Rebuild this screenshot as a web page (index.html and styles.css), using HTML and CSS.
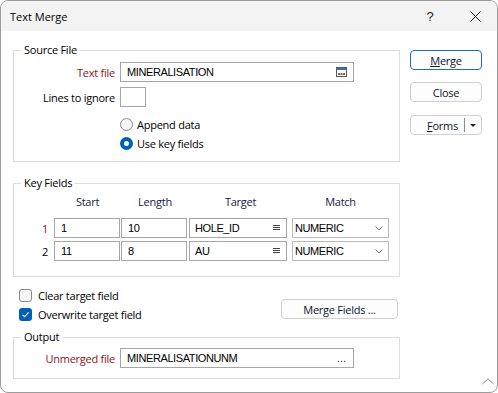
FILE: index.html
```html
<!DOCTYPE html>
<html lang="en">
<head>
    <meta charset="UTF-8">
    <title>Text Merge</title>
    <link rel="stylesheet" href="styles.css">
</head>
<body>
    <div class="window">
        <div class="titlebar">
            <span class="title">Text Merge</span>
            <span class="help">?</span>
            <span class="close-x">
                <svg width="11" height="11" viewBox="0 0 11 11"><path d="M0.5 0.5 L10.5 10.5 M10.5 0.5 L0.5 10.5" stroke="#1a1a1a" stroke-width="1"/></svg>
            </span>
        </div>

        <div class="body">
            <div class="main">
                <fieldset class="group source">
                    <legend>Source File</legend>
                    <div class="group-body">
                        <div class="form-row">
                            <span class="lbl req">Text file</span>
                            <div class="input file-input">
                                <span class="val">MINERALISATION</span>
                                <svg class="browse" width="11" height="10" viewBox="0 0 11 10">
                                    <rect x="0.5" y="0.5" width="10" height="9" fill="#fff" stroke="#4a5878"/>
                                    <rect x="1" y="1" width="9" height="2" fill="#3f6fa6"/>
                                    <rect x="2" y="6" width="2" height="2" fill="#8c6a2a"/>
                                    <rect x="4.5" y="6" width="2" height="2" fill="#8c6a2a"/>
                                    <rect x="7" y="6" width="2" height="2" fill="#8c6a2a"/>
                                </svg>
                            </div>
                        </div>
                        <div class="form-row gap">
                            <span class="lbl">Lines to ignore</span>
                            <div class="input small-input"></div>
                        </div>
                        <div class="radio-row first"><span class="radio"></span>Append data</div>
                        <div class="radio-row"><span class="radio on"></span>Use key fields</div>
                    </div>
                </fieldset>

                <fieldset class="group keys">
                    <legend>Key Fields</legend>
                    <div class="group-body">
                        <div class="key-grid">
                            <span class="col-head"></span>
                            <span class="col-head">Start</span>
                            <span class="col-head">Length</span>
                            <span class="col-head">Target</span>
                            <span class="col-head">Match</span>

                            <span class="row-no req">1</span>
                            <div class="input k-num">1</div>
                            <div class="input k-num">10</div>
                            <div class="input k-target"><span class="val">HOLE_ID</span><svg width="7" height="6" viewBox="0 0 7 6"><path d="M0 0.5 H7 M0 2.5 H7 M0 4.5 H7" stroke="#444" stroke-width="1"/></svg></div>
                            <div class="select"><span class="val">NUMERIC</span><svg width="8" height="5" viewBox="0 0 8 5"><path d="M0.5 0.5 L4 4 L7.5 0.5" stroke="#777" fill="none"/></svg></div>

                            <span class="row-no">2</span>
                            <div class="input k-num">11</div>
                            <div class="input k-num">8</div>
                            <div class="input k-target"><span class="val">AU</span><svg width="7" height="6" viewBox="0 0 7 6"><path d="M0 0.5 H7 M0 2.5 H7 M0 4.5 H7" stroke="#444" stroke-width="1"/></svg></div>
                            <div class="select"><span class="val">NUMERIC</span><svg width="8" height="5" viewBox="0 0 8 5"><path d="M0.5 0.5 L4 4 L7.5 0.5" stroke="#777" fill="none"/></svg></div>
                        </div>
                    </div>
                </fieldset>

                <div class="options">
                    <div class="checks">
                        <div class="check-row"><span class="checkbox"></span>Clear target field</div>
                        <div class="check-row"><span class="checkbox on"><svg width="13" height="13" viewBox="0 0 13 13"><path d="M3.5 6.8 L5.6 8.8 L9.6 4.4" stroke="#fff" stroke-width="1.1" fill="none"/></svg></span>Overwrite target field</div>
                    </div>
                    <button class="btn merge-fields">Merge Fields ...</button>
                </div>

                <fieldset class="group output">
                    <legend>Output</legend>
                    <div class="group-body">
                        <div class="form-row">
                            <span class="lbl req">Unmerged file</span>
                            <div class="input file-input">
                                <span class="val">MINERALISATIONUNM</span>
                                <span class="dots">...</span>
                            </div>
                        </div>
                    </div>
                </fieldset>
            </div>

            <div class="side">
                <button class="btn default"><u>M</u>erge</button>
                <button class="btn close-btn">Close</button>
                <button class="btn forms-btn"><span><u>F</u>orms</span><span class="divider"></span><span class="arrow"></span></button>
            </div>
        </div>

        <svg class="grip" width="12" height="7" viewBox="0 0 12 7"><path d="M0.5 6 L6 0.8 L11.5 6" stroke="#8a8a8a" fill="none"/></svg>
    </div>
</body>
</html>
```

FILE: styles.css
```css
* {
    margin: 0;
    padding: 0;
    box-sizing: border-box;
}

body {
    font-family: "Open Sans", "Segoe UI", sans-serif;
    font-size: 11px;
    letter-spacing: -0.25px;
    color: #000;
    background: #fff;
}

.window {
    position: relative;
    width: 498px;
    height: 393px;
    border: 1px solid #9c9c9c;
    border-radius: 8px;
    overflow: hidden;
    background: #fff;
}

.titlebar {
    display: flex;
    align-items: center;
    height: 30px;
    background: #f3f3f3;
    padding: 0 12px 0 9px;
}

.title {
    flex: 1;
    letter-spacing: 0;
}

.help {
    width: 20px;
    text-align: center;
    font-family: "Liberation Sans", sans-serif;
    font-size: 13px;
    color: #222;
}

.close-x {
    width: 20px;
    margin-left: 25px;
    display: flex;
    justify-content: center;
}

.body {
    display: flex;
    padding-left: 12px;
}

.main {
    width: 387px;
    padding-top: 11px;
}

.side {
    width: 72px;
    margin-left: 10px;
    padding-top: 19px;
    display: flex;
    flex-direction: column;
}

/* group boxes */
.group {
    border: 1px solid #dcdcdc;
    padding: 0;
    margin: 0;
    min-width: 0;
}

.group legend {
    margin-left: 7px;
    padding: 0 3px;
    line-height: 16px;
}

.source .group-body {
    padding: 4px 0 8px;
}

.keys {
    margin-top: 13px;
}

.keys .group-body {
    padding: 3px 0 15px;
}

.output {
    margin-top: 6px;
}

.output .group-body {
    padding: 3px 0 10px;
}

.form-row {
    display: flex;
    align-items: center;
    height: 20px;
}

.form-row.gap {
    margin-top: 5px;
}

.lbl {
    width: 101px;
    margin-right: 5px;
    text-align: right;
}

.req {
    color: #8e1414;
}

/* inputs */
.input,
.select {
    height: 20px;
    border: 1px solid #a6a6a6;
    background: #fff;
    display: flex;
    align-items: center;
    font-family: "Liberation Sans", sans-serif;
    font-size: 11px;
    letter-spacing: -0.4px;
}

.file-input {
    width: 234px;
    padding: 0 6px;
    justify-content: space-between;
}

.small-input {
    width: 26px;
}

.dots {
    color: #10204a;
    letter-spacing: 0;
    margin-right: 1px;
}

.radio-row {
    display: flex;
    align-items: center;
    height: 19px;
    padding-left: 106px;
}

.radio-row.first {
    margin-top: 8px;
}

.radio {
    width: 13px;
    height: 13px;
    border: 1px solid #8a8a8a;
    border-radius: 50%;
    background: #f6f6f6;
    margin-right: 4px;
}

.radio.on {
    border: 4px solid #005fb8;
    background: #fff;
}

/* key fields grid */
.key-grid {
    display: grid;
    grid-template-columns: 40px 67px 68px 103px 97px;
    row-gap: 3px;
    align-items: center;
}

.col-head {
    height: 16px;
    line-height: 16px;
    margin-bottom: 5px;
    text-align: center;
    color: #14203e;
}

.row-no {
    text-align: right;
    padding-right: 6px;
}

.k-num {
    width: 66px;
    padding-left: 6px;
}

.k-target {
    width: 98px;
    padding: 0 6px 0 5px;
    justify-content: space-between;
}

.select {
    width: 97px;
    border-color: #bababa;
    padding: 0 5px 0 2px;
    justify-content: space-between;
}

/* checkboxes */
.options {
    display: flex;
    justify-content: space-between;
    padding-top: 9px;
}

.check-row {
    display: flex;
    align-items: center;
    height: 18px;
    padding-left: 6px;
}

.check-row + .check-row {
    margin-top: 1px;
}

.checkbox {
    width: 13px;
    height: 13px;
    border: 1px solid #8a8a8a;
    border-radius: 3px;
    background: #f6f6f6;
    margin-right: 6px;
}

.checkbox.on {
    border: none;
    background: #005fb8;
}

.checkbox svg {
    display: block;
}

/* buttons */
.btn {
    height: 20px;
    border: 1px solid #d0d0d0;
    border-radius: 4px;
    background: #fdfdfd;
    font-family: "Open Sans", "Segoe UI", sans-serif;
    font-size: 11px;
    letter-spacing: -0.25px;
    color: #0d1630;
    display: flex;
    align-items: center;
    justify-content: center;
}

.btn.default {
    border-color: #1a6fc4;
}

.close-btn {
    margin-top: 12px;
}

.forms-btn {
    margin-top: 13px;
    justify-content: flex-end;
    padding-right: 5px;
}

.divider {
    width: 1px;
    height: 14px;
    background: #8c8c8c;
    margin: 0 5px 0 6px;
}

.arrow {
    width: 0;
    height: 0;
    border-left: 3px solid transparent;
    border-right: 3px solid transparent;
    border-top: 3px solid #222;
}

.merge-fields {
    width: 117px;
    margin-top: 13px;
    margin-right: 2px;
}

.grip {
    position: absolute;
    right: 3px;
    bottom: 7px;
}
```
